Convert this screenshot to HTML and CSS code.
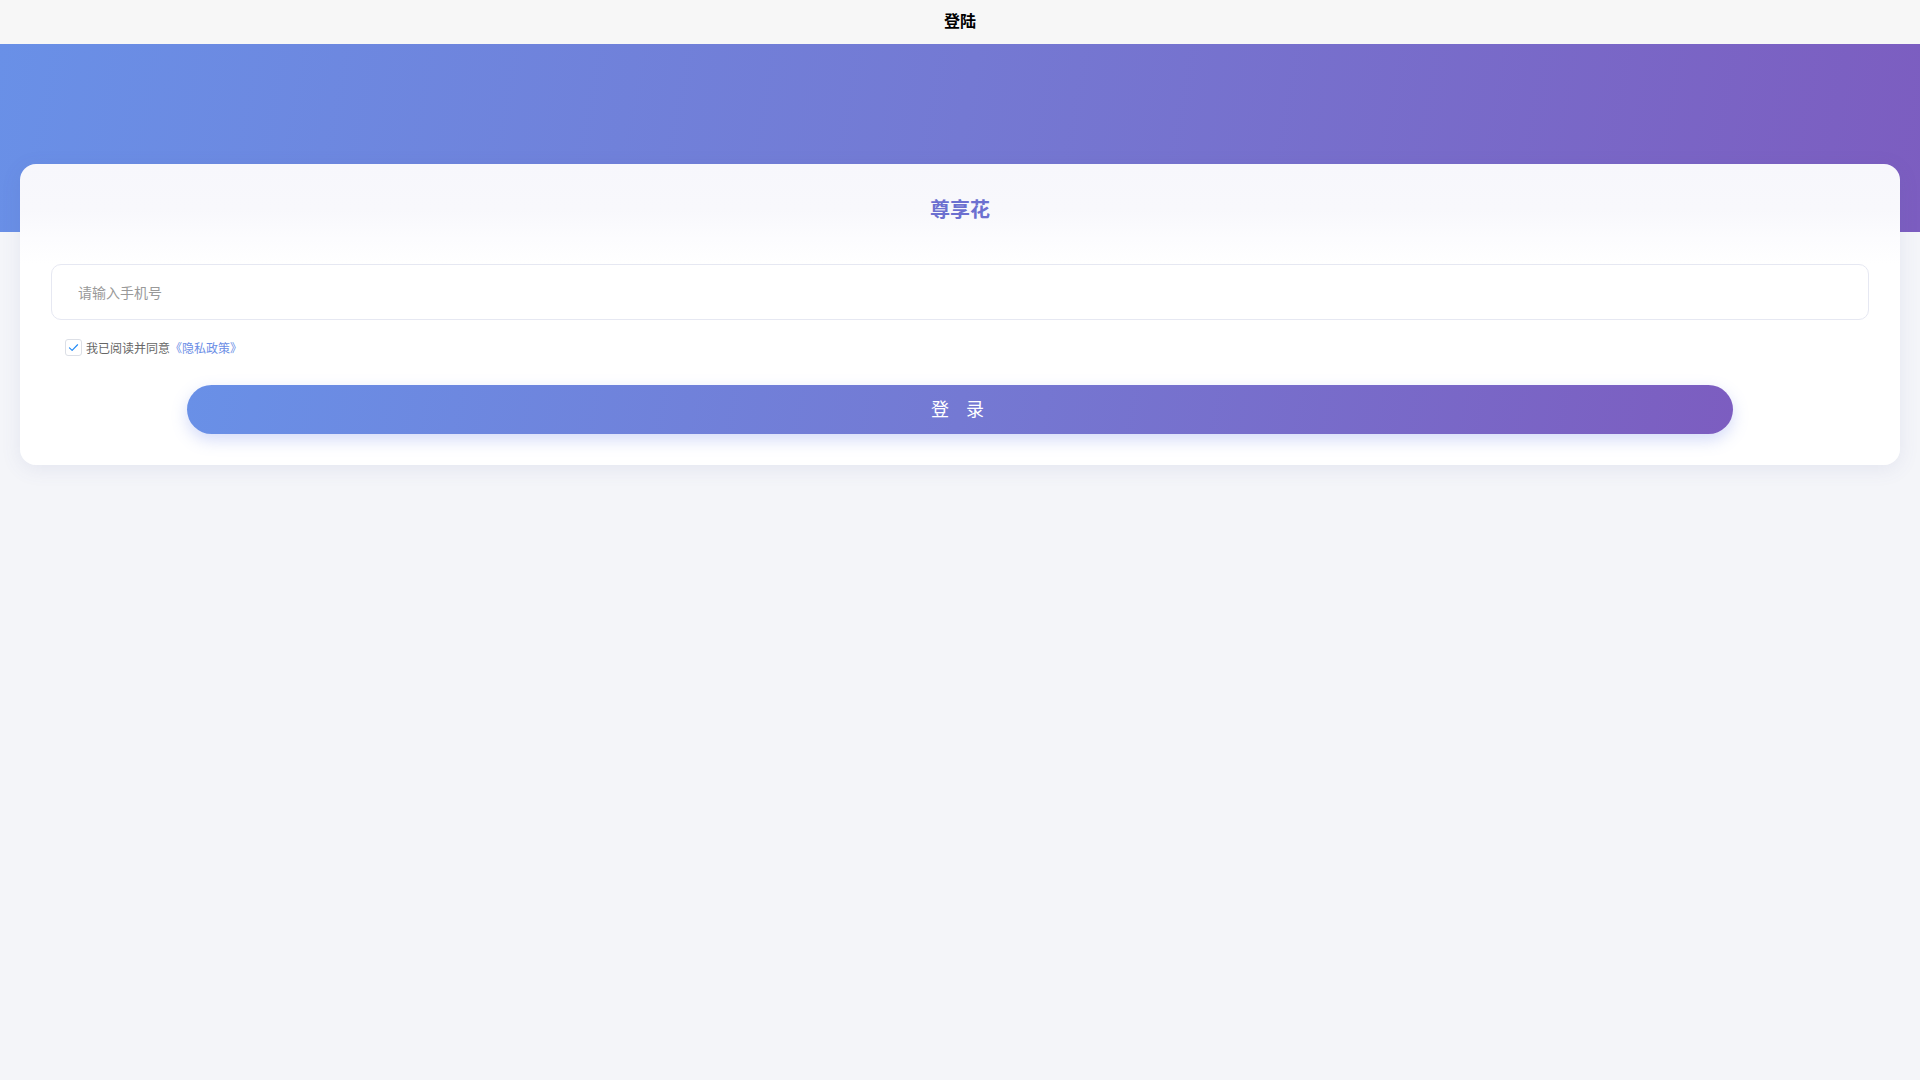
FILE: index.html
```html
<!DOCTYPE html>
<html lang="zh-CN">
<head>
<meta charset="utf-8">
<title>登陆</title>
<link rel="stylesheet" href="styles.css">
</head>
<body>
  <header class="navbar">登陆</header>
  <div class="hero"></div>
  <main class="card">
    <h1 class="title">尊享花</h1>
    <input class="phone" type="text" placeholder="请输入手机号">
    <label class="agree">
      <span class="check">
        <svg viewBox="0 0 16 16" width="13" height="13"><path d="M3 8.5 L6.3 11.6 L13 4.6" fill="none" stroke="#1e88f5" stroke-width="1.4" stroke-linecap="round" stroke-linejoin="round"/></svg>
      </span>
      <span class="agree-text">我已阅读并同意<a class="link">《隐私政策》</a></span>
    </label>
    <button class="btn">登 录</button>
  </main>
</body>
</html>
```
FILE: styles.css
```css
* { box-sizing: border-box; }
html, body { margin: 0; padding: 0; }
body {
  background: #f4f5f9;
  font-family: "Noto Sans CJK SC", "Noto Sans", sans-serif;
  min-height: 1080px;
}
.navbar {
  height: 44px;
  padding-bottom: 4px;
  background: #f7f7f7;
  display: flex;
  align-items: center;
  justify-content: center;
  font-size: 16px;
  font-weight: 700;
  color: #000;
}
.hero {
  height: 188px;
  background: linear-gradient(100deg, #6990e7 0%, #7479d3 50%, #7c5dc0 100%);
}
.card {
  position: relative;
  margin: -68px 20px 0;
  padding: 31px;
  border-radius: 16px;
  background: linear-gradient(180deg, #f7f7fc 0px, #f8f8fc 45px, #fcfcfe 75px, #ffffff 100px);
  box-shadow: 0 4px 20px rgba(90, 100, 160, 0.10);
}
.title {
  margin: 0 0 41px;
  text-align: center;
  font-size: 20px;
  line-height: 28px;
  font-weight: 700;
  color: #6c70d0;
}
.phone {
  display: block;
  width: 100%;
  height: 56px;
  border: 1px solid #e6e8f2;
  border-radius: 10px;
  padding: 0 26px;
  font-family: inherit;
  font-size: 14px;
  color: #333;
  background: #fff;
  outline: none;
}
.phone::placeholder { color: #999; }
.agree {
  margin-top: 18px;
  padding-left: 14px;
  height: 18px;
  display: flex;
  align-items: center;
  gap: 4px;
  font-size: 12px;
  color: #666;
}
.check {
  width: 17px;
  height: 17px;
  border: 1px solid #dcdfe6;
  border-radius: 3px;
  background: #fff;
  display: flex;
  align-items: center;
  justify-content: center;
}
.link { color: #6b8ee6; }
.btn {
  display: block;
  width: 85%;
  height: 49px;
  margin: 29px auto 0;
  padding: 0 0 3px;
  border: none;
  border-radius: 25px;
  background: linear-gradient(100deg, #6990e7 0%, #7479d3 50%, #7c5dc0 100%);
  color: #fff;
  font-family: inherit;
  font-size: 18px;
  letter-spacing: 5px;
  word-spacing: 3px;
  box-shadow: 0 6px 16px rgba(102, 126, 234, 0.28);
}
```
